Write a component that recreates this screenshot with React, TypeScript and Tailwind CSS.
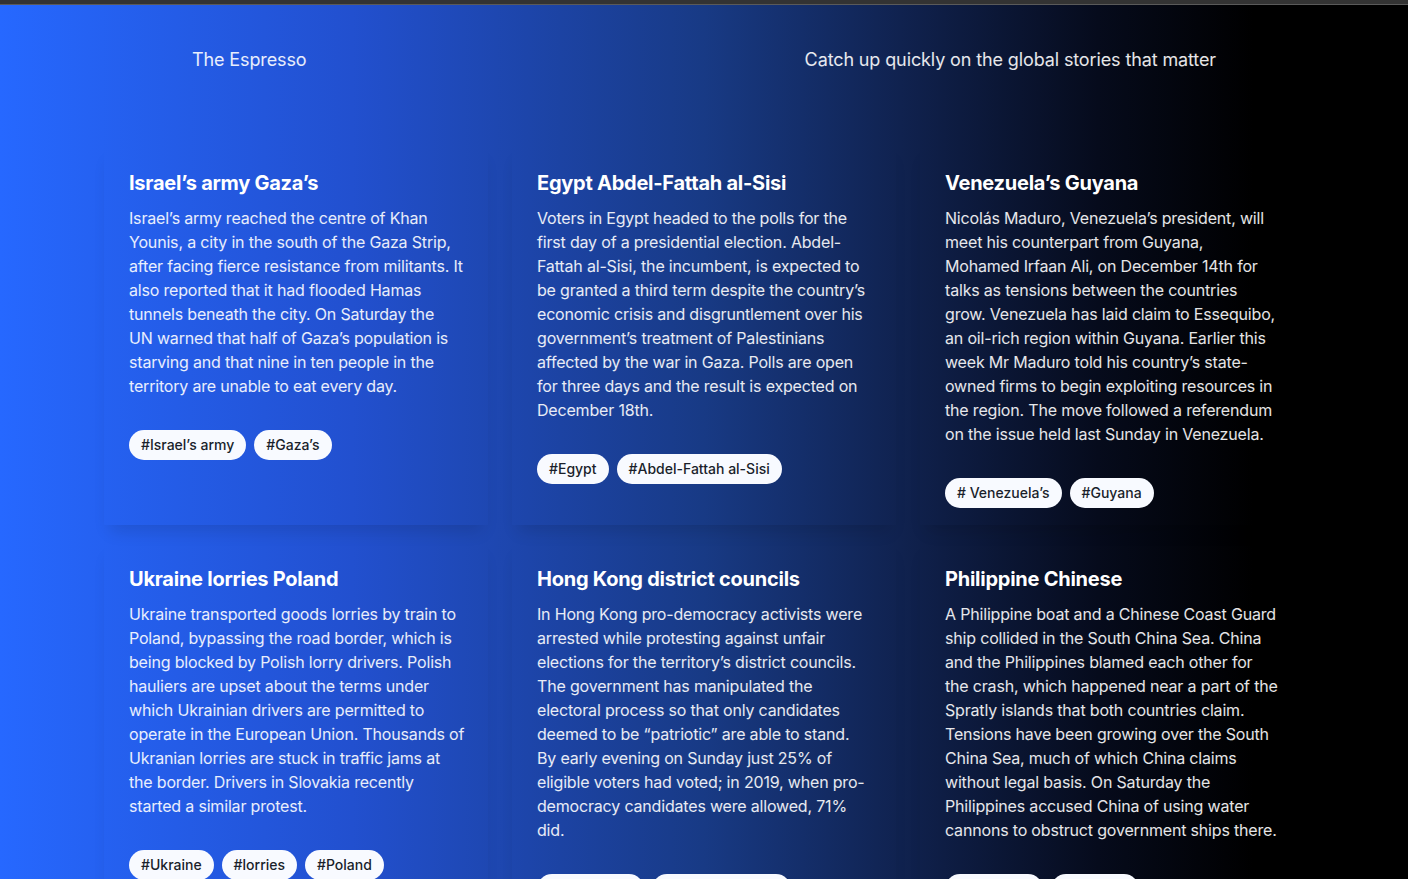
import React from "react";

interface Story {
  title: string;
  lines: string[];
  tags: string[];
}

// lines are kept as they break in the layout
const stories: Story[] = [
  {
    title: "Israel’s army Gaza’s",
    lines: [
      "Israel’s army reached the centre of Khan",
      "Younis, a city in the south of the Gaza Strip,",
      "after facing fierce resistance from militants. It",
      "also reported that it had flooded Hamas",
      "tunnels beneath the city. On Saturday the",
      "UN warned that half of Gaza’s population is",
      "starving and that nine in ten people in the",
      "territory are unable to eat every day.",
    ],
    tags: ["#Israel’s army", "#Gaza’s"],
  },
  {
    title: "Egypt Abdel-Fattah al-Sisi",
    lines: [
      "Voters in Egypt headed to the polls for the",
      "first day of a presidential election. Abdel-",
      "Fattah al-Sisi, the incumbent, is expected to",
      "be granted a third term despite the country’s",
      "economic crisis and disgruntlement over his",
      "government’s treatment of Palestinians",
      "affected by the war in Gaza. Polls are open",
      "for three days and the result is expected on",
      "December 18th.",
    ],
    tags: ["#Egypt", "#Abdel-Fattah al-Sisi"],
  },
  {
    title: "Venezuela’s Guyana",
    lines: [
      "Nicolás Maduro, Venezuela’s president, will",
      "meet his counterpart from Guyana,",
      "Mohamed Irfaan Ali, on December 14th for",
      "talks as tensions between the countries",
      "grow. Venezuela has laid claim to Essequibo,",
      "an oil-rich region within Guyana. Earlier this",
      "week Mr Maduro told his country’s state-",
      "owned firms to begin exploiting resources in",
      "the region. The move followed a referendum",
      "on the issue held last Sunday in Venezuela.",
    ],
    tags: ["# Venezuela’s", "#Guyana"],
  },
  {
    title: "Ukraine lorries Poland",
    lines: [
      "Ukraine transported goods lorries by train to",
      "Poland, bypassing the road border, which is",
      "being blocked by Polish lorry drivers. Polish",
      "hauliers are upset about the terms under",
      "which Ukrainian drivers are permitted to",
      "operate in the European Union. Thousands of",
      "Ukranian lorries are stuck in traffic jams at",
      "the border. Drivers in Slovakia recently",
      "started a similar protest.",
    ],
    tags: ["#Ukraine", "#lorries", "#Poland"],
  },
  {
    title: "Hong Kong district councils",
    lines: [
      "In Hong Kong pro-democracy activists were",
      "arrested while protesting against unfair",
      "elections for the territory’s district councils.",
      "The government has manipulated the",
      "electoral process so that only candidates",
      "deemed to be “patriotic” are able to stand.",
      "By early evening on Sunday just 25% of",
      "eligible voters had voted; in 2019, when pro-",
      "democracy candidates were allowed, 71%",
      "did.",
    ],
    tags: ["#Hong Kong", "#district councils"],
  },
  {
    title: "Philippine Chinese",
    lines: [
      "A Philippine boat and a Chinese Coast Guard",
      "ship collided in the South China Sea. China",
      "and the Philippines blamed each other for",
      "the crash, which happened near a part of the",
      "Spratly islands that both countries claim.",
      "Tensions have been growing over the South",
      "China Sea, much of which China claims",
      "without legal basis. On Saturday the",
      "Philippines accused China of using water",
      "cannons to obstruct government ships there.",
    ],
    tags: ["#Philippine", "#Chinese"],
  },
];

function StoryCard({ story }: { story: Story }) {
  return (
    <article className="flex flex-col border border-transparent px-6 pt-6 pb-4 shadow-[0_12px_16px_-6px_rgba(0,0,0,0.12)]">
      <h2 className="mb-[9px] text-xl leading-7 font-bold tracking-[-0.25px] text-white">
        {story.title}
      </h2>
      <p className="text-base leading-6 tracking-[-0.18px] text-white/90">
        {story.lines.map((line, i) => (
          <span key={i} className="block whitespace-nowrap">
            {line}
          </span>
        ))}
      </p>
      <div className="mt-8 flex flex-wrap gap-2">
        {story.tags.map((tag) => (
          <span
            key={tag}
            className="rounded-full bg-[#f8faff] px-3 py-[5px] text-sm leading-5 font-medium text-[#1a1f2b]"
          >
            {tag}
          </span>
        ))}
      </div>
    </article>
  );
}

export default function App() {
  return (
    <div className="flex h-screen flex-col overflow-hidden font-['Inter',sans-serif]">
      <div className="h-1 shrink-0 bg-[#333333]" />
      <div className="h-px shrink-0 bg-[#5a5a5a]" />
      <main className="flex-1 bg-[linear-gradient(90deg,#2668ff_0%,#2250cf_25%,#183a85_50%,#10224f_64%,#060b1c_78%,#000000_89%,#000000_100%)]">
        <header className="flex items-center justify-between px-48 pt-[41px] pb-[39px] text-lg leading-7 tracking-[-0.12px] text-white/90">
          <span>The Espresso</span>
          <span>Catch up quickly on the global stories that matter</span>
        </header>
        <section className="mx-auto mt-[31px] grid max-w-[1200px] grid-cols-3 gap-x-6 gap-y-[15px]">
          {stories.map((story) => (
            <StoryCard key={story.title} story={story} />
          ))}
        </section>
      </main>
    </div>
  );
}
